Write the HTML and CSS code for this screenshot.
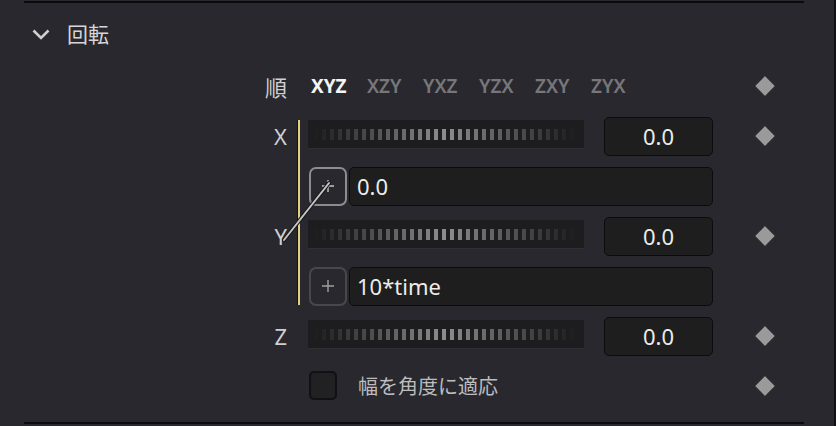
FILE: index.html
```html
<!DOCTYPE html>
<html lang="ja">
<head>
<meta charset="UTF-8">
<meta name="viewport" content="width=device-width, initial-scale=1.0">
<title>回転</title>
<link rel="stylesheet" href="styles.css">
</head>
<body>
<div class="panel">
<div class="rule top"></div>
<div class="section-head">
<svg class="chev" width="18" height="11" viewBox="0 0 18 11"><polyline points="1.5,1.5 9,9 16.5,1.5" fill="none" stroke="#cfcfcf" stroke-width="2.6"/></svg>
<span class="title">回転</span>
</div>

<div class="grid">
<div class="lbl">順</div>
<div class="ctl order">
<span class="tab active">XYZ</span>
<span class="tab">XZY</span>
<span class="tab">YXZ</span>
<span class="tab">YZX</span>
<span class="tab">ZXY</span>
<span class="tab">ZYX</span>
</div>
<div class="key"><span class="diamond"></span></div>

<div class="link-bar"></div>

<div class="lbl">X</div>
<div class="ctl field">
<div class="slider"><div class="ticks"></div></div>
<div class="valbox">0.0</div>
</div>
<div class="key"><span class="diamond"></span></div>

<div class="ctl expr">
<div class="plus on"><svg width="14" height="14" viewBox="0 0 14 14"><path d="M7 1v12M1 7h12" stroke="currentColor" stroke-width="1.4"/></svg></div>
<div class="exprbox">0.0</div>
</div>

<div class="lbl">Y</div>
<div class="ctl field">
<div class="slider"><div class="ticks"></div></div>
<div class="valbox">0.0</div>
</div>
<div class="key"><span class="diamond"></span></div>

<div class="ctl expr">
<div class="plus"><svg width="14" height="14" viewBox="0 0 14 14"><path d="M7 1v12M1 7h12" stroke="currentColor" stroke-width="1.4"/></svg></div>
<div class="exprbox">10*time</div>
</div>

<div class="lbl">Z</div>
<div class="ctl field">
<div class="slider"><div class="ticks"></div></div>
<div class="valbox">0.0</div>
</div>
<div class="key"><span class="diamond"></span></div>

<div class="ctl check-row">
<span class="checkbox"></span>
<span class="check-label">幅を角度に適応</span>
</div>
<div class="key"><span class="diamond"></span></div>
</div>

<div class="rule bottom"></div>

<!-- pick whip from the X expression to the Y label -->
<svg class="whip" width="836" height="426" viewBox="0 0 836 426">
<line x1="329" y1="183" x2="284" y2="240" stroke="#1a1a1c" stroke-width="4" stroke-linecap="round"/>
<line x1="329" y1="183" x2="284" y2="240" stroke="#c4c4c4" stroke-width="2" stroke-linecap="round"/>
</svg>
</div>
</body>
</html>
```

FILE: styles.css
```css
html, body {
margin: 0;
padding: 0;
background-color: #28282e;
}
body {
font-family: "Noto Sans", "Noto Sans CJK JP", sans-serif;
color: #d0d0d0;
}
.panel {
position: relative;
width: 834px;
height: 426px;
border-right: 2px solid #111113;
overflow: hidden;
}
.rule {
height: 2px;
width: 780px;
margin-left: 24px;
background-color: #0b0b0c;
}
.rule.top {
margin-top: 1px;
}
.rule.bottom {
margin-top: 11px;
}
.section-head {
height: 54px;
padding-top: 4px;
padding-left: 32px;
display: flex;
align-items: center;
}
.chev {
display: block;
}
.title {
margin-left: 17px;
font-size: 21px;
color: #d6d6d6;
line-height: 1;
}
.grid {
display: grid;
grid-template-columns: 288px 20px 405px 1fr;
grid-auto-rows: 50px;
}
.lbl {
grid-column: 1;
display: flex;
align-items: center;
justify-content: flex-end;
padding-right: 1px;
font-size: 22px;
color: #cfcfcf;
}
.ctl {
grid-column: 3;
display: flex;
align-items: center;
}
.key {
grid-column: 4;
display: flex;
align-items: center;
}
.diamond {
width: 14px;
height: 14px;
margin-left: 44px;
background-color: #9a9a9c;
border: 1px solid #111;
transform: rotate(45deg);
}
.link-bar {
grid-column: 2;
grid-row: 2 / 6;
width: 2px;
margin: 9px 0 6px 10px;
background-color: #e3d17f;
box-shadow: -1px 0 0 #131313;
}
.order {
padding-left: 3px;
}
.tab {
width: 56px;
font-size: 19px;
font-weight: 600;
color: #77777a;
}
.tab.active {
color: #f4f4f4;
font-weight: 700;
}
.slider {
width: 276px;
height: 28px;
margin-bottom: 4px;
margin-right: 20px;
background-color: #1d1d1f;
box-shadow: 0 1px 0 #2e2e33;
display: flex;
align-items: center;
}
.ticks {
flex: 1;
height: 11px;
margin: 0 8px 0 6px;
background: repeating-linear-gradient(90deg, #8e8e8e 0 4px, transparent 4px 8px);
-webkit-mask-image: linear-gradient(90deg, rgba(0,0,0,0), #000 50%, rgba(0,0,0,0));
mask-image: linear-gradient(90deg, rgba(0,0,0,0), #000 50%, rgba(0,0,0,0));
}
.valbox {
width: 109px;
height: 39px;
box-sizing: border-box;
border: 1px solid #0c0c0d;
border-radius: 5px;
background-color: #1e1e1f;
color: #ececec;
font-size: 22px;
display: flex;
align-items: center;
justify-content: center;
}
.expr {
padding-left: 1px;
}
.plus {
width: 38px;
height: 39px;
box-sizing: border-box;
border: 2px solid #48484c;
border-radius: 7px;
margin-right: 2px;
display: flex;
align-items: center;
justify-content: center;
color: #a0a0a0;
}
.plus svg {
display: block;
}
.plus.on {
border-color: #8d8d90;
color: #c4c4c4;
}
.exprbox {
flex: 1;
height: 39px;
box-sizing: border-box;
border: 1px solid #0c0c0d;
border-radius: 5px;
background-color: #1e1e1f;
color: #ececec;
font-size: 22px;
padding-left: 7px;
display: flex;
align-items: center;
}
.check-row {
padding-left: 1px;
margin-bottom: 2px;
}
.checkbox {
width: 28px;
height: 29px;
box-sizing: border-box;
border: 2px solid #111113;
border-radius: 5px;
background-color: #212123;
}
.check-label {
margin-left: 21px;
font-size: 20px;
color: #bdbdbd;
}
.whip {
position: absolute;
left: 0;
top: 0;
pointer-events: none;
}
```
